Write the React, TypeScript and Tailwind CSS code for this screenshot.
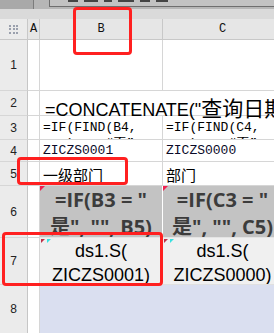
import React from "react";

const rh = "bg-[#ebebeb] border-r border-b border-r-[#c6c6c6] border-b-[#d6d6d6] flex items-center justify-center text-[12px] text-[#222] [font-family:'Liberation_Sans',sans-serif]";
const aCell = "bg-white border-r border-b border-[#d6d6d6]";
const cell = "bg-white border-r border-b border-[#d6d6d6] overflow-hidden relative";

export default function App() {
  return (
    <div className="relative w-[274px] h-[333px] overflow-hidden bg-white">
      {/* top toolbar strip */}
      <div className="flex h-[9px] bg-[#b3b3b3]">
        <div className="w-[33px] bg-[#a9a9a9]" />
        <div className="flex-1 border-l border-[#7c7c7c] bg-[#b6b6b6] flex">
          <div className="ml-[15px] flex-1 h-[7px] border-l border-b border-[#6e6e6e] bg-[#c2c2c2] flex gap-[6px] pl-[18px]">
            <div className="w-[10px] h-[2px] bg-[#444]" />
            <div className="w-[14px] h-[2px] bg-[#444]" />
            <div className="w-[8px] h-[2px] bg-[#444]" />
            <div className="w-[16px] h-[2px] bg-[#444]" />
            <div className="w-[10px] h-[2px] bg-[#444]" />
            <div className="w-[12px] h-[2px] bg-[#444]" />
          </div>
        </div>
      </div>
      <div className="h-[10px] bg-[#dadada]" />

      {/* sheet grid */}
      <div className="grid grid-cols-[28px_12px_123px_120px] grid-rows-[21px_51px_25px_24px_22px_24px_52px_47px_49px]">
        {/* header row */}
        <div className="bg-[#ebebeb] border-r border-b border-[#c8c8c8] flex items-center justify-center">
          <div className="grid grid-cols-3 gap-[1.5px]">
            {Array.from({ length: 9 }).map((_, i) => (
              <div key={i} className="w-[2px] h-[2px] bg-[#9aa0ad]" />
            ))}
          </div>
        </div>
        <div className="bg-[#e6e6e6] border-r border-b border-[#c8c8c8] flex items-center justify-center text-[12px] text-[#111] [font-family:'Liberation_Mono',monospace]">A</div>
        <div className="bg-[#e6e6e6] border-r border-b border-[#c8c8c8] flex items-center justify-center text-[12px] text-[#111] [font-family:'Liberation_Mono',monospace]">B</div>
        <div className="bg-[#e6e6e6] border-r border-b border-[#c8c8c8] flex items-center justify-center text-[12px] text-[#111] [font-family:'Liberation_Mono',monospace]">C</div>

        {/* row 1 */}
        <div className={rh}>1</div>
        <div className={aCell} />
        <div className={cell} />
        <div className={cell} />

        {/* row 2 */}
        <div className={rh}>2</div>
        <div className={aCell} />
        <div className="bg-white border-b border-[#d6d6d6] relative overflow-visible z-10">
          <div className="pl-[5px] pt-[6px] leading-[20px] whitespace-nowrap text-black text-[18px] [font-family:'Liberation_Sans',sans-serif]">
            =CONCATENATE(&quot;<span className="text-[21px] [font-family:'Noto_Sans_CJK_SC',sans-serif]">查询日期</span>
          </div>
        </div>
        <div className="border-r border-b border-[#d6d6d6]" />

        {/* row 3 */}
        <div className={rh}>3</div>
        <div className={aCell} />
        <div className={cell}>
          <div className="pl-[3px] pt-[4px] leading-[16px] text-[13px] text-black whitespace-pre [font-family:'Liberation_Mono',monospace]">
            {"=IF(FIND(B4,\n   ),   \u201c\u5426\u201d"}
          </div>
        </div>
        <div className={cell}>
          <div className="pl-[3px] pt-[4px] leading-[16px] text-[13px] text-black whitespace-pre [font-family:'Liberation_Mono',monospace]">
            {"=IF(FIND(C4,\n   ),   \u201c\u5426\u201d"}
          </div>
        </div>

        {/* row 4 */}
        <div className={rh}>4</div>
        <div className={aCell} />
        <div className={cell}>
          <div className="pl-[3px] pt-[3px] leading-[16px] text-[13px] text-[#0a0a28] [font-family:'Liberation_Mono',monospace]">ZICZS0001</div>
        </div>
        <div className={cell}>
          <div className="pl-[3px] pt-[3px] leading-[16px] text-[13px] text-[#0a0a28] [font-family:'Liberation_Mono',monospace]">ZICZS0000</div>
        </div>

        {/* row 5 */}
        <div className={rh}>5</div>
        <div className={aCell} />
        <div className={cell}>
          <div className="pl-[3px] pt-[3px] leading-[20px] text-[15px] text-black [font-family:'Noto_Sans_CJK_SC',sans-serif]">一级部门</div>
        </div>
        <div className={cell}>
          <div className="pl-[3px] pt-[3px] leading-[20px] text-[15px] text-black [font-family:'Noto_Sans_CJK_SC',sans-serif]">部门</div>
        </div>

        {/* row 6 */}
        <div className={rh}>6</div>
        <div className={aCell} />
        <div className="bg-[#c3c3c3] border-r border-b border-r-white border-b-[#e4e4e4] overflow-hidden relative">
          <div className="absolute left-0 top-0 w-0 h-0 border-t-[5px] border-t-[#f02050] border-r-[5px] border-r-transparent" />
          <div className="text-center whitespace-nowrap leading-[27px] text-[20px] font-bold text-[#3c3c3c] [font-family:'Open_Sans','Noto_Sans_CJK_SC',sans-serif]">
            =IF(B3 = &quot;<br />是&quot;, &quot;&quot;, B5)
          </div>
        </div>
        <div className="bg-[#c3c3c3] border-r border-b border-r-white border-b-[#e4e4e4] overflow-hidden relative">
          <div className="absolute left-0 top-0 w-0 h-0 border-t-[5px] border-t-[#f02050] border-r-[5px] border-r-transparent" />
          <div className="text-center whitespace-nowrap leading-[27px] text-[20px] font-bold text-[#3c3c3c] [font-family:'Open_Sans','Noto_Sans_CJK_SC',sans-serif]">
            =IF(C3 = &quot;<br />是&quot;, &quot;&quot;, C5)
          </div>
        </div>

        {/* row 7 */}
        <div className={rh}>7</div>
        <div className={aCell} />
        <div className="bg-[#f0f0f0] border-r border-b border-r-white border-b-[#e0e0e0] overflow-hidden relative">
          <div className="absolute left-[1px] top-[1px] w-0 h-0 border-t-[4px] border-t-[#c03048] border-r-[4px] border-r-transparent" />
          <div className="absolute left-[7px] top-[1px] w-0 h-0 border-t-[4px] border-t-[#38e0e0] border-r-[4px] border-r-transparent" />
          <div className="pt-[1px] text-center leading-[24px] text-[18px] text-black whitespace-nowrap [font-family:'Liberation_Sans',sans-serif]">
            ds1.S(<br />ZICZS0001)
          </div>
        </div>
        <div className="bg-[#f0f0f0] border-r border-b border-r-white border-b-[#e0e0e0] overflow-hidden relative">
          <div className="absolute left-[1px] top-[1px] w-0 h-0 border-t-[4px] border-t-[#c03048] border-r-[4px] border-r-transparent" />
          <div className="absolute left-[7px] top-[1px] w-0 h-0 border-t-[4px] border-t-[#38e0e0] border-r-[4px] border-r-transparent" />
          <div className="pt-[1px] text-center leading-[24px] text-[18px] text-black whitespace-nowrap [font-family:'Liberation_Sans',sans-serif]">
            ds1.S(<br />ZICZS0000)
          </div>
        </div>

        {/* row 8 */}
        <div className={rh}>8</div>
        <div className={aCell} />
        <div className="bg-[#dadff0] border-b border-[#dadff0]" />
        <div className="bg-[#dadff0] border-b border-[#dadff0]" />
      </div>

      {/* red highlight boxes */}
      <div className="absolute left-[73px] top-[7px] w-[59px] h-[48px] border-[3px] border-[#ff2020] rounded-[4px]" />
      <div className="absolute left-[17px] top-[157px] w-[111px] h-[28px] border-[3px] border-[#ff2020] rounded-[4px]" />
      <div className="absolute left-[2px] top-[232px] w-[161px] h-[54px] border-[3px] border-[#ff2020] rounded-[4px]" />
    </div>
  );
}
